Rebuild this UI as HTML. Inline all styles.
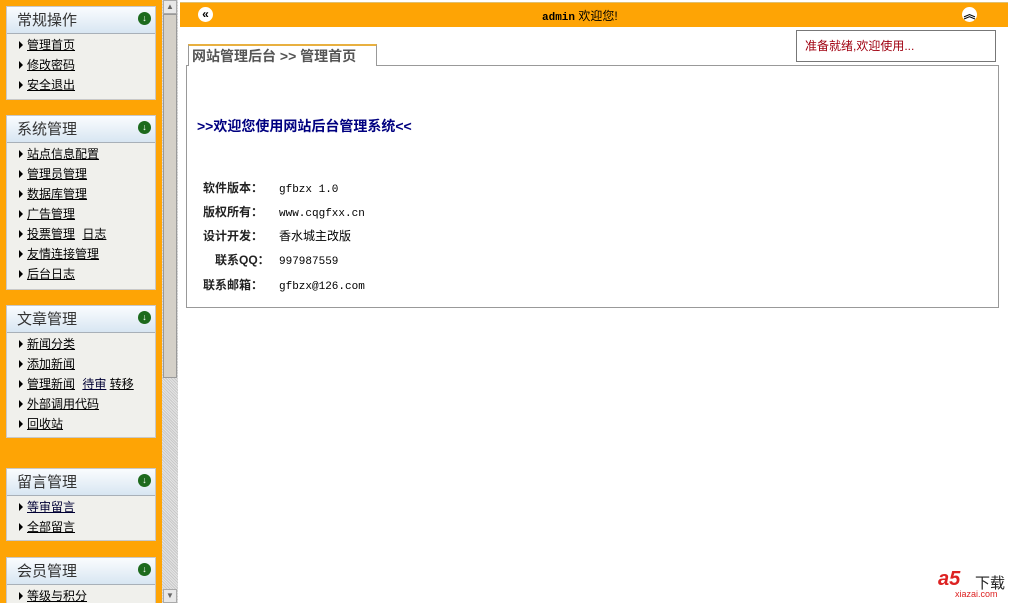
<!DOCTYPE html>
<html><head><meta charset="utf-8"><style>
*{margin:0;padding:0;box-sizing:border-box}
html,body{width:1024px;height:603px;overflow:hidden}
body{background:#fff;position:relative;font-family:"Liberation Sans","Noto Sans CJK SC",sans-serif;font-size:12px;color:#000}
#left{position:absolute;left:0;top:0;width:162px;height:603px;background:#fea405;overflow:hidden}
.box{position:absolute;left:6px;width:150px;background:#f0f0ec;border:1px solid #c8c8c8;overflow:hidden}
.hd{height:27px;background:linear-gradient(#fafcfe,#d8e6f2);border-bottom:1px solid #a8b0b8;font-size:15px;color:#333;padding:2px 0 0 10px;position:relative}
.hd i{position:absolute;right:4px;top:5px;width:13px;height:13px;border-radius:50%;background:#1d6a1d;color:#fff;font-size:9px;line-height:13px;text-align:center;font-style:normal;font-weight:bold}
.it{height:20px;line-height:20px;padding-left:20px;position:relative;font-size:12px}
.it:before{content:"";position:absolute;left:12px;top:6px;border-left:4px solid #000;border-top:4px solid transparent;border-bottom:4px solid transparent}
.it u{color:#000;margin-right:4px}
.it b{font-weight:normal;text-decoration:underline;color:#003}
#sb{position:absolute;left:162px;top:0;width:16px;height:603px;background:repeating-linear-gradient(45deg,#e4e4e4 0 1px,#c8c8c8 1px 2px)}
#thumb{position:absolute;left:1px;top:14px;width:14px;height:364px;background:#d4d0c8;border:1px solid #999}
.arr{position:absolute;left:1px;width:14px;height:14px;background:#e8e8e8;border:1px solid #aaa;font-size:8px;text-align:center;line-height:12px;color:#666}
#top{position:absolute;left:180px;top:2px;width:828px;height:25px;background:#fea405;border-top:1px solid #e0c070}
.ci{position:absolute;top:4px;width:15px;height:15px;border-radius:50%;background:#fff;font-size:12px;line-height:14px;text-align:center;font-weight:bold}
#tab{position:absolute;left:188px;top:44px;width:189px;height:22px;border:1px solid #999;border-top:2px solid #e8b040;border-bottom:none;background:#fff;font-size:14px;color:#555;padding:0 0 0 3px;z-index:2;font-weight:bold}
#cont{position:absolute;left:186px;top:65px;width:813px;height:243px;border:1px solid #999}
#status{position:absolute;left:796px;top:30px;width:200px;height:32px;border:1px solid #777;background:#fff;color:#a00010;padding:6px 0 0 8px;z-index:3}
.row{position:absolute;left:16px;font-size:12px}
.row span{display:inline-block;width:76px;font-weight:bold;color:#222}
.mono{font-family:"Liberation Mono",monospace;font-size:11px;font-style:normal}
</style></head><body>
<div id="left">
<div class="box" style="top:6px;height:94px"><div class="hd">常规操作<i>↓</i></div><div style="height:1px"></div>
<div class="it"><u>管理首页</u></div><div class="it"><u>修改密码</u></div><div class="it"><u>安全退出</u></div></div>
<div class="box" style="top:115px;height:175px"><div class="hd">系统管理<i>↓</i></div><div style="height:1px"></div>
<div class="it"><u>站点信息配置</u></div><div class="it"><u>管理员管理</u></div><div class="it"><u>数据库管理</u></div><div class="it"><u>广告管理</u></div><div class="it"><u>投票管理</u> <u>日志</u></div><div class="it"><u>友情连接管理</u></div><div class="it"><u>后台日志</u></div></div>
<div class="box" style="top:305px;height:133px"><div class="hd">文章管理<i>↓</i></div><div style="height:1px"></div>
<div class="it"><u>新闻分类</u></div><div class="it"><u>添加新闻</u></div><div class="it"><u>管理新闻</u> <b>待审</b> <u>转移</u></div><div class="it"><u>外部调用代码</u></div><div class="it"><u>回收站</u></div></div>
<div class="box" style="top:468px;height:73px"><div class="hd">留言管理<i>↓</i></div><div style="height:1px"></div>
<div class="it"><b>等审留言</b></div><div class="it"><u>全部留言</u></div></div>
<div class="box" style="top:557px;height:60px"><div class="hd">会员管理<i>↓</i></div><div style="height:1px"></div>
<div class="it"><u>等级与积分</u></div></div>
</div>
<div id="sb"><div class="arr" style="top:0">▲</div><div id="thumb"></div><div class="arr" style="top:589px">▼</div></div>
<div id="top"><div class="ci" style="left:18px">«</div><div style="position:absolute;left:362px;top:4px;font-size:12px"><b class="mono">admin</b> 欢迎您!</div><div class="ci" style="left:782px">︽</div></div>
<div id="status">准备就绪,欢迎使用...</div>
<div id="tab">网站管理后台 &gt;&gt; 管理首页</div>
<div id="cont">
<div style="position:absolute;left:10px;top:50px;font-size:14px;font-weight:bold;color:#000080">&gt;&gt;欢迎您使用网站后台管理系统&lt;&lt;</div>
<div class="row" style="top:113px"><span>软件版本：</span><i class="mono">gfbzx 1.0</i></div>
<div class="row" style="top:137px"><span>版权所有：</span><i class="mono">www.cqgfxx.cn</i></div>
<div class="row" style="top:161px"><span>设计开发：</span>香水城主改版</div>
<div class="row" style="top:185px"><span style="padding-left:12px">联系QQ：</span><i class="mono">997987559</i></div>
<div class="row" style="top:210px"><span>联系邮箱：</span><i class="mono">gfbzx@126.com</i></div>
</div>
<div style="position:absolute;left:938px;top:568px;color:#d22;font-weight:bold;font-size:20px;font-style:italic">a5</div>
<div style="position:absolute;left:975px;top:572px;font-size:15px;color:#222">下载</div>
<div style="position:absolute;left:955px;top:589px;font-size:9px;color:#d22">xiazai.com</div>
</body></html>
